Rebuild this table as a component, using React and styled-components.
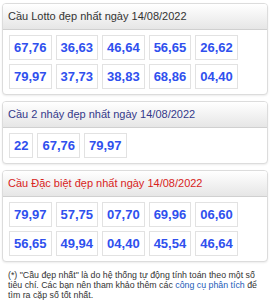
import React from "react";
import styled, { createGlobalStyle } from "styled-components";

const GlobalStyle = createGlobalStyle`
  body {
    margin: 0;
    background: #fff;
    font-family: "Liberation Sans", Arial, sans-serif;
  }
`;

const Page = styled.div`
  width: 266px;
  padding: 3px 0 0 2px;
  display: flex;
  flex-direction: column;
  gap: 6px;
`;

const Panel = styled.div`
  border: 1px solid #dcdcdc;
  border-radius: 4px;
  background: #fff;
  box-shadow: 0 1px 2px rgba(0, 0, 0, 0.08);
  overflow: hidden;
`;

const PanelHead = styled.div`
  height: 25px;
  line-height: 25px;
  padding: 0 5px;
  font-size: 11px;
  color: ${(p) => p.$color || "#333"};
  background: linear-gradient(#ffffff, #e6e6e6);
  border-bottom: 1px solid #d0d0d0;
  white-space: nowrap;
`;

const Grid = styled.div`
  display: flex;
  flex-wrap: wrap;
  gap: 4px;
  padding: 5px 6px 5px;
`;

const Num = styled.span`
  display: block;
  height: 23px;
  line-height: 23px;
  padding: 0 4px;
  border: 1px solid #e2e2e2;
  font-size: 13px;
  font-weight: bold;
  color: #2f50ee;
`;

const Note = styled.p`
  margin: 0;
  padding: 2px 2px 2px 6px;
  font-size: 8.8px;
  line-height: 10px;
  color: #333;
`;

const Link = styled.a`
  color: #1c5bb8;
  text-decoration: none;
`;

const panels = [
  {
    title: "Cầu Lotto đẹp nhất ngày 14/08/2022",
    color: "#333",
    nums: ["67,76", "36,63", "46,64", "56,65", "26,62", "79,97", "37,73", "38,83", "68,86", "04,40"],
  },
  {
    title: "Cầu 2 nháy đẹp nhất ngày 14/08/2022",
    color: "#34398a",
    nums: ["22", "67,76", "79,97"],
  },
  {
    title: "Cầu Đặc biệt đẹp nhất ngày 14/08/2022",
    color: "#d8231c",
    nums: ["79,97", "57,75", "07,70", "69,96", "06,60", "56,65", "49,94", "04,40", "45,54", "46,64"],
  },
];

export default function App() {
  return (
    <>
      <GlobalStyle />
      <Page>
        {panels.map((p) => (
          <Panel key={p.title}>
            <PanelHead $color={p.color}>{p.title}</PanelHead>
            <Grid>
              {p.nums.map((n, i) => (
                <Num key={i}>{n}</Num>
              ))}
            </Grid>
          </Panel>
        ))}
        <Note>
          (*) "Cầu đẹp nhất" là do hệ thống tự động tính toán theo một số tiêu
          chí. Các bạn nên tham khảo thêm các <Link href="#">công cụ phân tích</Link> để
          tìm ra cặp số tốt nhất.
        </Note>
      </Page>
    </>
  );
}
